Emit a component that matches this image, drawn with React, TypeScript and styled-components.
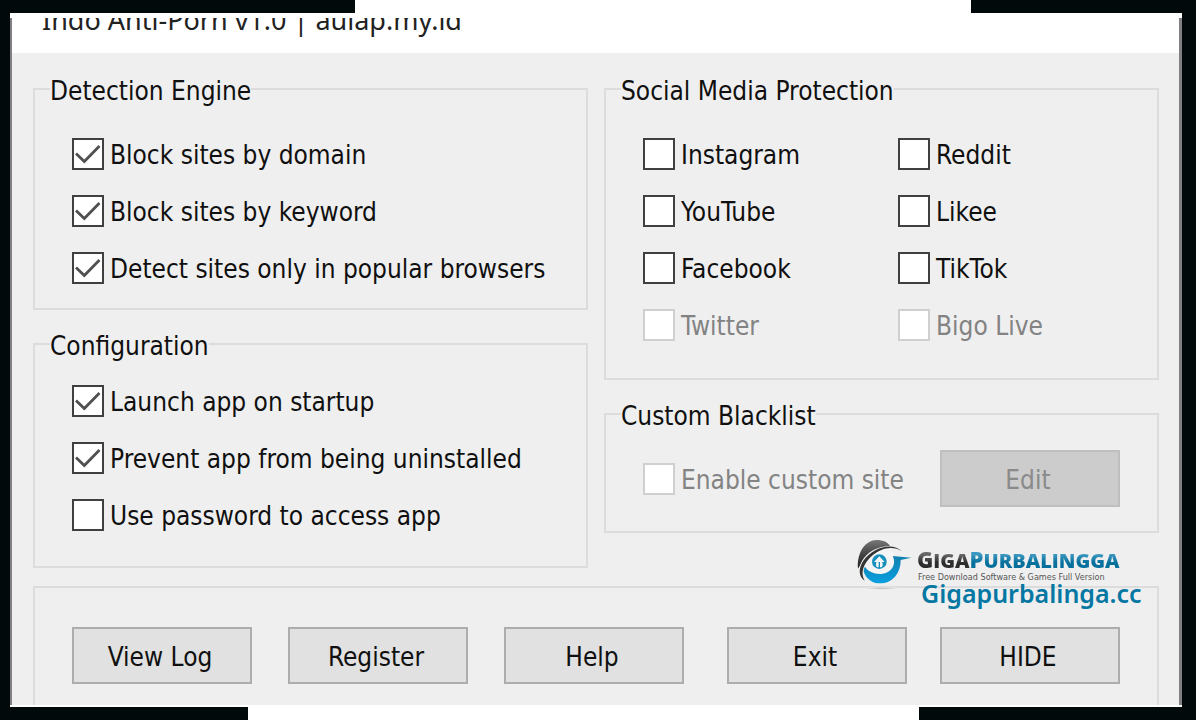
import React from "react";
import styled, { createGlobalStyle } from "styled-components";

const GlobalStyle = createGlobalStyle`
  *, *::before, *::after { box-sizing: border-box; }
  body {
    margin: 0;
    background: #fff;
    color: #101010;
    font-family: "DejaVu Sans Condensed", "DejaVu Sans", sans-serif;
    font-size: 26px;
    line-height: 32px;
  }
`;

const Page = styled.div`
  display: flex;
  flex-direction: column;
  min-height: 100vh;
  padding-right: 4px;
`;

const Strip = styled.div`
  display: flex;
  justify-content: space-between;
  height: 13px;
`;

const StripBar = styled.span<{ $share: number }>`
  flex: 0 0 ${(p) => p.$share}%;
  background: #02090b;
`;

const Frame = styled.div`
  display: flex;
  flex: 1;
  flex-direction: column;
  padding: 5px 0 2px;
  border: solid #02090b;
  border-width: 0 14px 0 10px;
`;

const Window = styled.main`
  display: flex;
  flex: 1;
  flex-direction: column;
  border: solid #808080;
  border-width: 0 3px 0 2px;
  background: #efefef;
`;

const TitleBar = styled.header`
  height: 35px;
  padding-left: 30px;
  overflow: hidden;
  background: #fff;
`;

const Title = styled.h1`
  margin: -16px 0 0;
  font: 400 27px/36px "Noto Sans", sans-serif;
  color: #222;
  white-space: nowrap;
`;

const Content = styled.div`
  position: relative;
  display: flex;
  flex: 1;
  flex-direction: column;
  gap: 18px;
  padding: 18px 20px 0 21px;
`;

const Columns = styled.div`
  display: grid;
  grid-template-columns: 1fr 1fr;
  gap: 16px;
  align-items: start;
`;

const Column = styled.div`
  display: grid;
  gap: 16px;
`;

const Group = styled.fieldset<{ $top: number; $bottom: number }>`
  min-width: 0;
  margin: 0;
  padding: ${(p) => p.$top}px 37px ${(p) => p.$bottom}px;
  border: 2px solid #dcdcdc;
`;

const Legend = styled.legend`
  margin-left: -22px;
  padding: 4px 0 0;
`;

const Options = styled.div<{ $columns?: number }>`
  display: grid;
  grid-template-columns: ${(p) => (p.$columns === 2 ? "255px 1fr" : "1fr")};
  gap: 25px 0;
`;

const Option = styled.label<{ $disabled?: boolean }>`
  display: flex;
  align-items: center;
  gap: 6px;
  height: 32px;
  line-height: 34px;
  color: ${(p) => (p.$disabled ? "#838383" : "inherit")};
  white-space: nowrap;
`;

const OptionText = styled.span`
  padding-top: 2px;
`;

const Tick = styled.span`
  display: grid;
  flex: none;
  width: 32px;
  height: 32px;

  & > * { grid-area: 1 / 1; }
`;

const TickInput = styled.input`
  appearance: none;
  width: 32px;
  height: 32px;
  margin: 0;
  border: 2px solid #404040;
  background: #fff;

  &:disabled { border-color: #cfcfcf; }
  & + svg { visibility: hidden; pointer-events: none; }
  &:checked + svg { visibility: visible; }
`;

const Button = styled.button`
  width: 180px;
  height: 57px;
  padding: 2px 4px 0 0;
  border: 2px solid #adadad;
  border-radius: 0;
  background: #e1e1e1;
  color: inherit;
  font: inherit;

  &:disabled {
    border-color: #bfbfbf;
    background: #cccccc;
    color: #8a8a8a;
  }
`;

const CustomRow = styled.div`
  display: flex;
  align-items: center;
  justify-content: space-between;
`;

const Actions = styled.section`
  display: flex;
  flex: 1;
  align-items: flex-start;
  justify-content: space-between;
  padding: 39px 37px 21px;
  border: solid #dcdcdc;
  border-width: 2px 2px 0;
`;

const ButtonSet = styled.div<{ $gap: number }>`
  display: flex;
  gap: ${(p) => p.$gap}px;
`;

const Brand = styled.aside`
  position: absolute;
  top: 485px;
  right: 36px;
  display: flex;
  gap: 5px;
  font-family: "Open Sans", sans-serif;
`;

const BrandText = styled.div`
  display: flex;
  flex-direction: column;
  width: 226px;
`;

const BrandName = styled.strong`
  padding-top: 9px;
  font-size: 20px;
  font-weight: 800;
  line-height: 24px;
  white-space: nowrap;
`;

const BrandPart = styled.span<{ $from: string; $to: string }>`
  display: inline-block;
  background: linear-gradient(${(p) => p.$from} 30%, ${(p) => p.$to} 60%);
  background-clip: text;
  color: transparent;

  &::first-letter { font-size: 22px; }
`;

const Tagline = styled.span`
  padding-left: 1px;
  font: 9px/8px "DejaVu Sans Condensed", sans-serif;
  color: #555;
  white-space: nowrap;
`;

const SiteLink = styled.a`
  padding-left: 4px;
  font: 600 25px/25px "Noto Sans", sans-serif;
  color: #0577a3;
  text-decoration: none;
`;

type Item = { label: string; checked?: boolean; disabled?: boolean };

const detection: Item[] = [
  { label: "Block sites by domain", checked: true },
  { label: "Block sites by keyword", checked: true },
  { label: "Detect sites only in popular browsers", checked: true },
];

const configuration: Item[] = [
  { label: "Launch app on startup", checked: true },
  { label: "Prevent app from being uninstalled", checked: true },
  { label: "Use password to access app" },
];

const social: Item[] = [
  { label: "Instagram" },
  { label: "Reddit" },
  { label: "YouTube" },
  { label: "Likee" },
  { label: "Facebook" },
  { label: "TikTok" },
  { label: "Twitter", disabled: true },
  { label: "Bigo Live", disabled: true },
];

function CheckOption({ label, checked, disabled }: Item) {
  return (
    <Option $disabled={disabled}>
      <Tick>
        <TickInput type="checkbox" defaultChecked={checked} disabled={disabled} />
        <svg width="32" height="32" viewBox="0 0 32 32" fill="none" aria-hidden="true">
          <path d="M4 15.5 12.3 23.5 27.5 8" stroke="#505050" strokeWidth="2.8" />
        </svg>
      </Tick>
      <OptionText>{label}</OptionText>
    </Option>
  );
}

function BrandMark() {
  return (
    <svg width="56" height="54" viewBox="0 0 168 162" aria-hidden="true">
      <defs>
        <linearGradient id="dark" x1="0" y1="0" x2="0" y2="1">
          <stop offset="0" stopColor="#777" />
          <stop offset="0.5" stopColor="#444" />
          <stop offset="1" stopColor="#222" />
        </linearGradient>
        <linearGradient id="blue" x1="0" y1="0" x2="0" y2="1">
          <stop offset="0" stopColor="#1180ad" />
          <stop offset="1" stopColor="#0a9fe0" />
        </linearGradient>
        <radialGradient id="shade">
          <stop offset="0" stopColor="#bcbcbc" />
          <stop offset="1" stopColor="#efefef" />
        </radialGradient>
      </defs>
      <ellipse cx="77" cy="151" rx="52" ry="4" fill="url(#shade)" />
      <circle cx="72" cy="74" r="50" fill="#f5f5f5" />
      <path d="M6 92C2 44 28 6 62 6c20 0 34 7 40 18C64 28 28 54 6 92Z" fill="url(#dark)" />
      <path d="M22 98C30 124 50 136 72 136c36 0 62-28 62-70l32-7-56-5c14 28-8 54-38 54-20 0-38-8-48-26Z" fill="url(#blue)" />
      <path d="M137 42C110 24 74 34 50 56 26 78 14 104 26 128 2 112 6 84 24 60 56 20 116 14 137 42Z" fill="#f5f5f5" />
      <path d="M137 40C110 22 76 31 50 52 22 76 12 104 26 128 8 116 6 92 22 68 52 26 112 12 137 40Z" fill="#353535" />
      <circle cx="70" cy="71" r="22" fill="#168fbd" />
      <path d="M70 55 54 72h8c-4 6-2 12 1 16h5V72h4v16h5c3-4 5-10 1-16h8Z" fill="#f5f5f5" />
    </svg>
  );
}

export default function App() {
  return (
    <>
      <GlobalStyle />
      <Page>
        <Strip>
          <StripBar $share={29.7} />
          <StripBar $share={18.8} />
        </Strip>
        <Frame>
          <Window>
            <TitleBar>
              <Title>Indo Anti-Porn v1.0 | aulap.my.id</Title>
            </TitleBar>
            <Content>
              <Columns>
                <Column>
                  <Group $top={31} $bottom={24}>
                    <Legend>Detection Engine</Legend>
                    <Options>
                      {detection.map((item) => <CheckOption key={item.label} {...item} />)}
                    </Options>
                  </Group>
                  <Group $top={23} $bottom={35}>
                    <Legend>Configuration</Legend>
                    <Options>
                      {configuration.map((item) => <CheckOption key={item.label} {...item} />)}
                    </Options>
                  </Group>
                </Column>
                <Column>
                  <Group $top={31} $bottom={37}>
                    <Legend>Social Media Protection</Legend>
                    <Options $columns={2}>
                      {social.map((item) => <CheckOption key={item.label} {...item} />)}
                    </Options>
                  </Group>
                  <Group $top={18} $bottom={24}>
                    <Legend>Custom Blacklist</Legend>
                    <CustomRow>
                      <CheckOption label="Enable custom site" disabled />
                      <Button type="button" disabled>Edit</Button>
                    </CustomRow>
                  </Group>
                </Column>
              </Columns>
              <Actions>
                <ButtonSet $gap={36}>
                  <Button type="button">View Log</Button>
                  <Button type="button">Register</Button>
                  <Button type="button">Help</Button>
                </ButtonSet>
                <ButtonSet $gap={33}>
                  <Button type="button">Exit</Button>
                  <Button type="button">HIDE</Button>
                </ButtonSet>
              </Actions>
              <Brand>
                <BrandMark />
                <BrandText>
                  <BrandName>
                    <BrandPart $from="#666" $to="#2c2c2c">GIGA</BrandPart>
                    <BrandPart $from="#3a97bf" $to="#06709c">PURBALINGGA</BrandPart>
                  </BrandName>
                  <Tagline>Free Download Software &amp; Games Full Version</Tagline>
                  <SiteLink href="#home">Gigapurbalinga.cc</SiteLink>
                </BrandText>
              </Brand>
            </Content>
          </Window>
        </Frame>
        <Strip>
          <StripBar $share={20.7} />
          <StripBar $share={23.2} />
        </Strip>
      </Page>
    </>
  );
}
